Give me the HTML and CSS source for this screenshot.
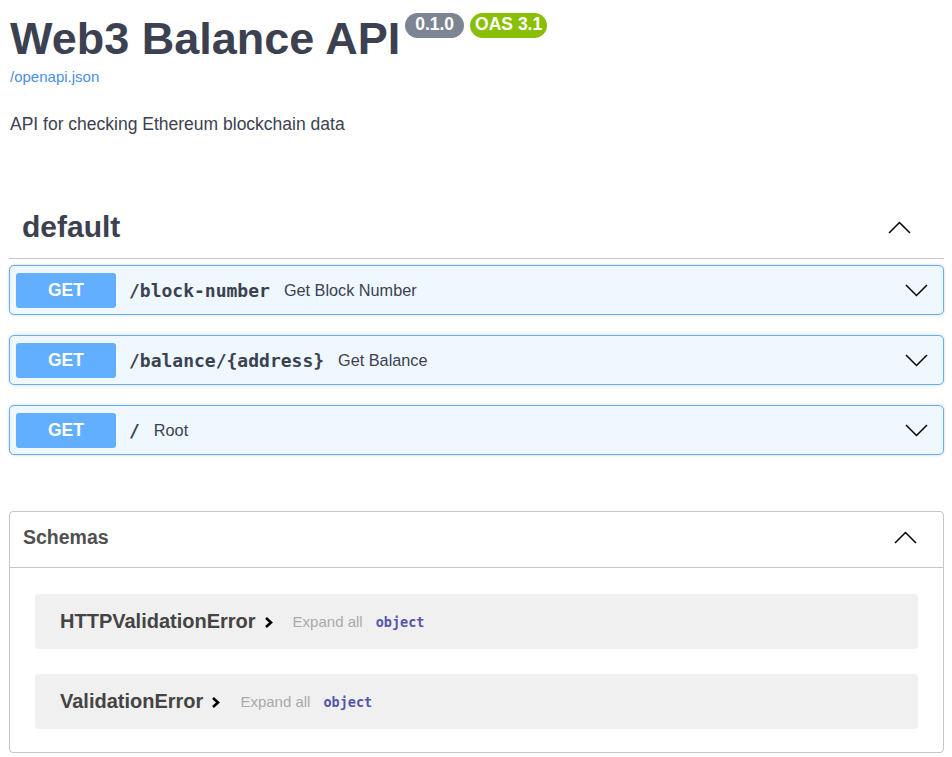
FILE: index.html
```html
<!DOCTYPE html>
<html lang="en">
<head>
<meta charset="utf-8">
<title>Web3 Balance API</title>
<link rel="stylesheet" href="styles.css">
</head>
<body>
<div class="page">
  <header class="info">
    <h1 class="title">
      <span class="title-text">Web3 Balance API</span>
      <span class="badges">
        <span class="badge badge-version">0.1.0</span>
        <span class="badge badge-oas">OAS 3.1</span>
      </span>
    </h1>
    <a class="spec-link" href="#">/openapi.json</a>
    <p class="desc">API for checking Ethereum blockchain data</p>
  </header>

  <section class="tag">
    <div class="tag-header">
      <h3 class="tag-name">default</h3>
      <svg class="chev" width="23" height="13" viewBox="0 0 23 13"><polyline points="1,12 11.5,1.5 22,12" fill="none" stroke="#000" stroke-width="1.5"/></svg>
    </div>
    <div class="ops">
      <div class="op">
        <span class="method">GET</span>
        <span class="path">/block-number</span>
        <span class="summary">Get Block Number</span>
        <svg class="chev op-chev" width="23" height="13" viewBox="0 0 23 13"><polyline points="1,1 11.5,11.5 22,1" fill="none" stroke="#000" stroke-width="1.5"/></svg>
      </div>
      <div class="op">
        <span class="method">GET</span>
        <span class="path">/balance/{address}</span>
        <span class="summary">Get Balance</span>
        <svg class="chev op-chev" width="23" height="13" viewBox="0 0 23 13"><polyline points="1,1 11.5,11.5 22,1" fill="none" stroke="#000" stroke-width="1.5"/></svg>
      </div>
      <div class="op">
        <span class="method">GET</span>
        <span class="path">/</span>
        <span class="summary">Root</span>
        <svg class="chev op-chev" width="23" height="13" viewBox="0 0 23 13"><polyline points="1,1 11.5,11.5 22,1" fill="none" stroke="#000" stroke-width="1.5"/></svg>
      </div>
    </div>
  </section>

  <section class="models">
    <div class="models-header">
      <h4 class="models-title">Schemas</h4>
      <svg class="chev" width="23" height="13" viewBox="0 0 23 13"><polyline points="1,12 11.5,1.5 22,12" fill="none" stroke="#000" stroke-width="1.5"/></svg>
    </div>
    <div class="models-body">
      <div class="model">
        <span class="model-title">HTTPValidationError</span>
        <svg class="model-arrow" width="10" height="12" viewBox="0 0 10 12"><polyline points="2,2 7,6.5 2,11" fill="none" stroke="#000" stroke-width="2.6"/></svg>
        <span class="expand">Expand all</span>
        <span class="prop-type">object</span>
      </div>
      <div class="model">
        <span class="model-title">ValidationError</span>
        <svg class="model-arrow" width="10" height="12" viewBox="0 0 10 12"><polyline points="2,2 7,6.5 2,11" fill="none" stroke="#000" stroke-width="2.6"/></svg>
        <span class="expand">Expand all</span>
        <span class="prop-type">object</span>
      </div>
    </div>
  </section>
</div>
</body>
</html>
```

FILE: styles.css
```css
html, body {
  margin: 0;
  padding: 0;
  background: #fff;
}

body {
  font-family: "Liberation Sans", Arial, sans-serif;
  color: #3b4151;
}

.page {
  padding: 0 8px 0 9px;
}

/* Info */
.title {
  display: flex;
  align-items: flex-start;
  margin: 13px 0 0;
  font-size: 45px;
  line-height: 52px;
  font-weight: 700;
  color: #3b4151;
}

.title-text {
  margin-left: 1px;
}

.badges {
  display: flex;
  gap: 6px;
  margin-left: 5px;
}

.badge {
  display: inline-block;
  font-size: 17.5px;
  line-height: 20px;
  font-weight: 700;
  color: #fff;
  border-radius: 57px;
  padding: 1px 5px 4px;
}

.badge-version {
  background: #7d8492;
  padding-left: 10px;
  padding-right: 10px;
}

.badge-oas {
  background: #89bf04;
}

.spec-link {
  display: block;
  margin-top: 3px;
  margin-left: 1px;
  font-size: 15px;
  line-height: 17px;
  color: #4990e2;
  text-decoration: none;
}

.desc {
  margin: 29px 0 0 1px;
  font-size: 17.5px;
  line-height: 20px;
  color: #3b4151;
}

/* Tag */
.tag-header {
  margin-top: 62px;
  height: 63px;
  box-sizing: border-box;
  display: flex;
  align-items: center;
  justify-content: space-between;
  padding: 0 33px 0 13px;
  border-bottom: 1px solid rgba(59, 65, 81, 0.3);
}

.tag-name {
  margin: 0;
  font-size: 30px;
  line-height: 34px;
  font-weight: 700;
  color: #3b4151;
}

.chev {
  display: block;
  flex: none;
}

.ops {
  padding-top: 6px;
}

.op {
  display: flex;
  align-items: center;
  box-sizing: border-box;
  height: 50px;
  margin-bottom: 20px;
  padding: 0 6px;
  background: #eff7ff;
  border: 1px solid #61affe;
  border-radius: 5px;
  box-shadow: 0 0 3px rgba(0, 0, 0, 0.19);
}

.op:last-child {
  margin-bottom: 0;
}

.method {
  width: 100px;
  height: 35px;
  flex: none;
  display: flex;
  align-items: center;
  justify-content: center;
  background: #61affe;
  border-radius: 3px;
  color: #fff;
  font-size: 17.5px;
  font-weight: 700;
}

.path {
  margin-left: 13px;
  font-family: "DejaVu Sans Mono", "Liberation Mono", monospace;
  font-size: 18px;
  font-weight: 700;
  color: #3b4151;
}

.summary {
  margin-left: 14px;
  font-size: 16.25px;
  color: #3b4151;
}

.op-chev {
  margin-left: auto;
  margin-right: 9px;
}

/* Models */
.models {
  margin-top: 56px;
  border: 1px solid rgba(59, 65, 81, 0.3);
  border-radius: 4px;
}

.models-header {
  display: flex;
  align-items: center;
  justify-content: space-between;
  box-sizing: border-box;
  height: 56px;
  padding: 0 26px 5px 13px;
  border-bottom: 1px solid rgba(59, 65, 81, 0.3);
}

.models-title {
  margin: 0;
  font-size: 19.5px;
  font-weight: 700;
  color: #505050;
}

.models-body {
  padding: 26px 25px 23px;
}

.model {
  display: flex;
  align-items: center;
  height: 55px;
  padding-left: 25px;
  margin-bottom: 25px;
  background: #f0f0f0;
  border-radius: 4px;
}

.model:last-child {
  margin-bottom: 0;
}

.model-title {
  font-size: 20px;
  font-weight: 700;
  color: #444;
}

.model-arrow {
  display: block;
  margin-left: 8px;
}

.expand {
  margin-left: 19px;
  font-size: 15px;
  color: #aaa;
}

.prop-type {
  margin-left: 13px;
  font-family: "DejaVu Sans Mono", "Liberation Mono", monospace;
  font-size: 13.5px;
  font-weight: 700;
  color: #55a;
}
```
